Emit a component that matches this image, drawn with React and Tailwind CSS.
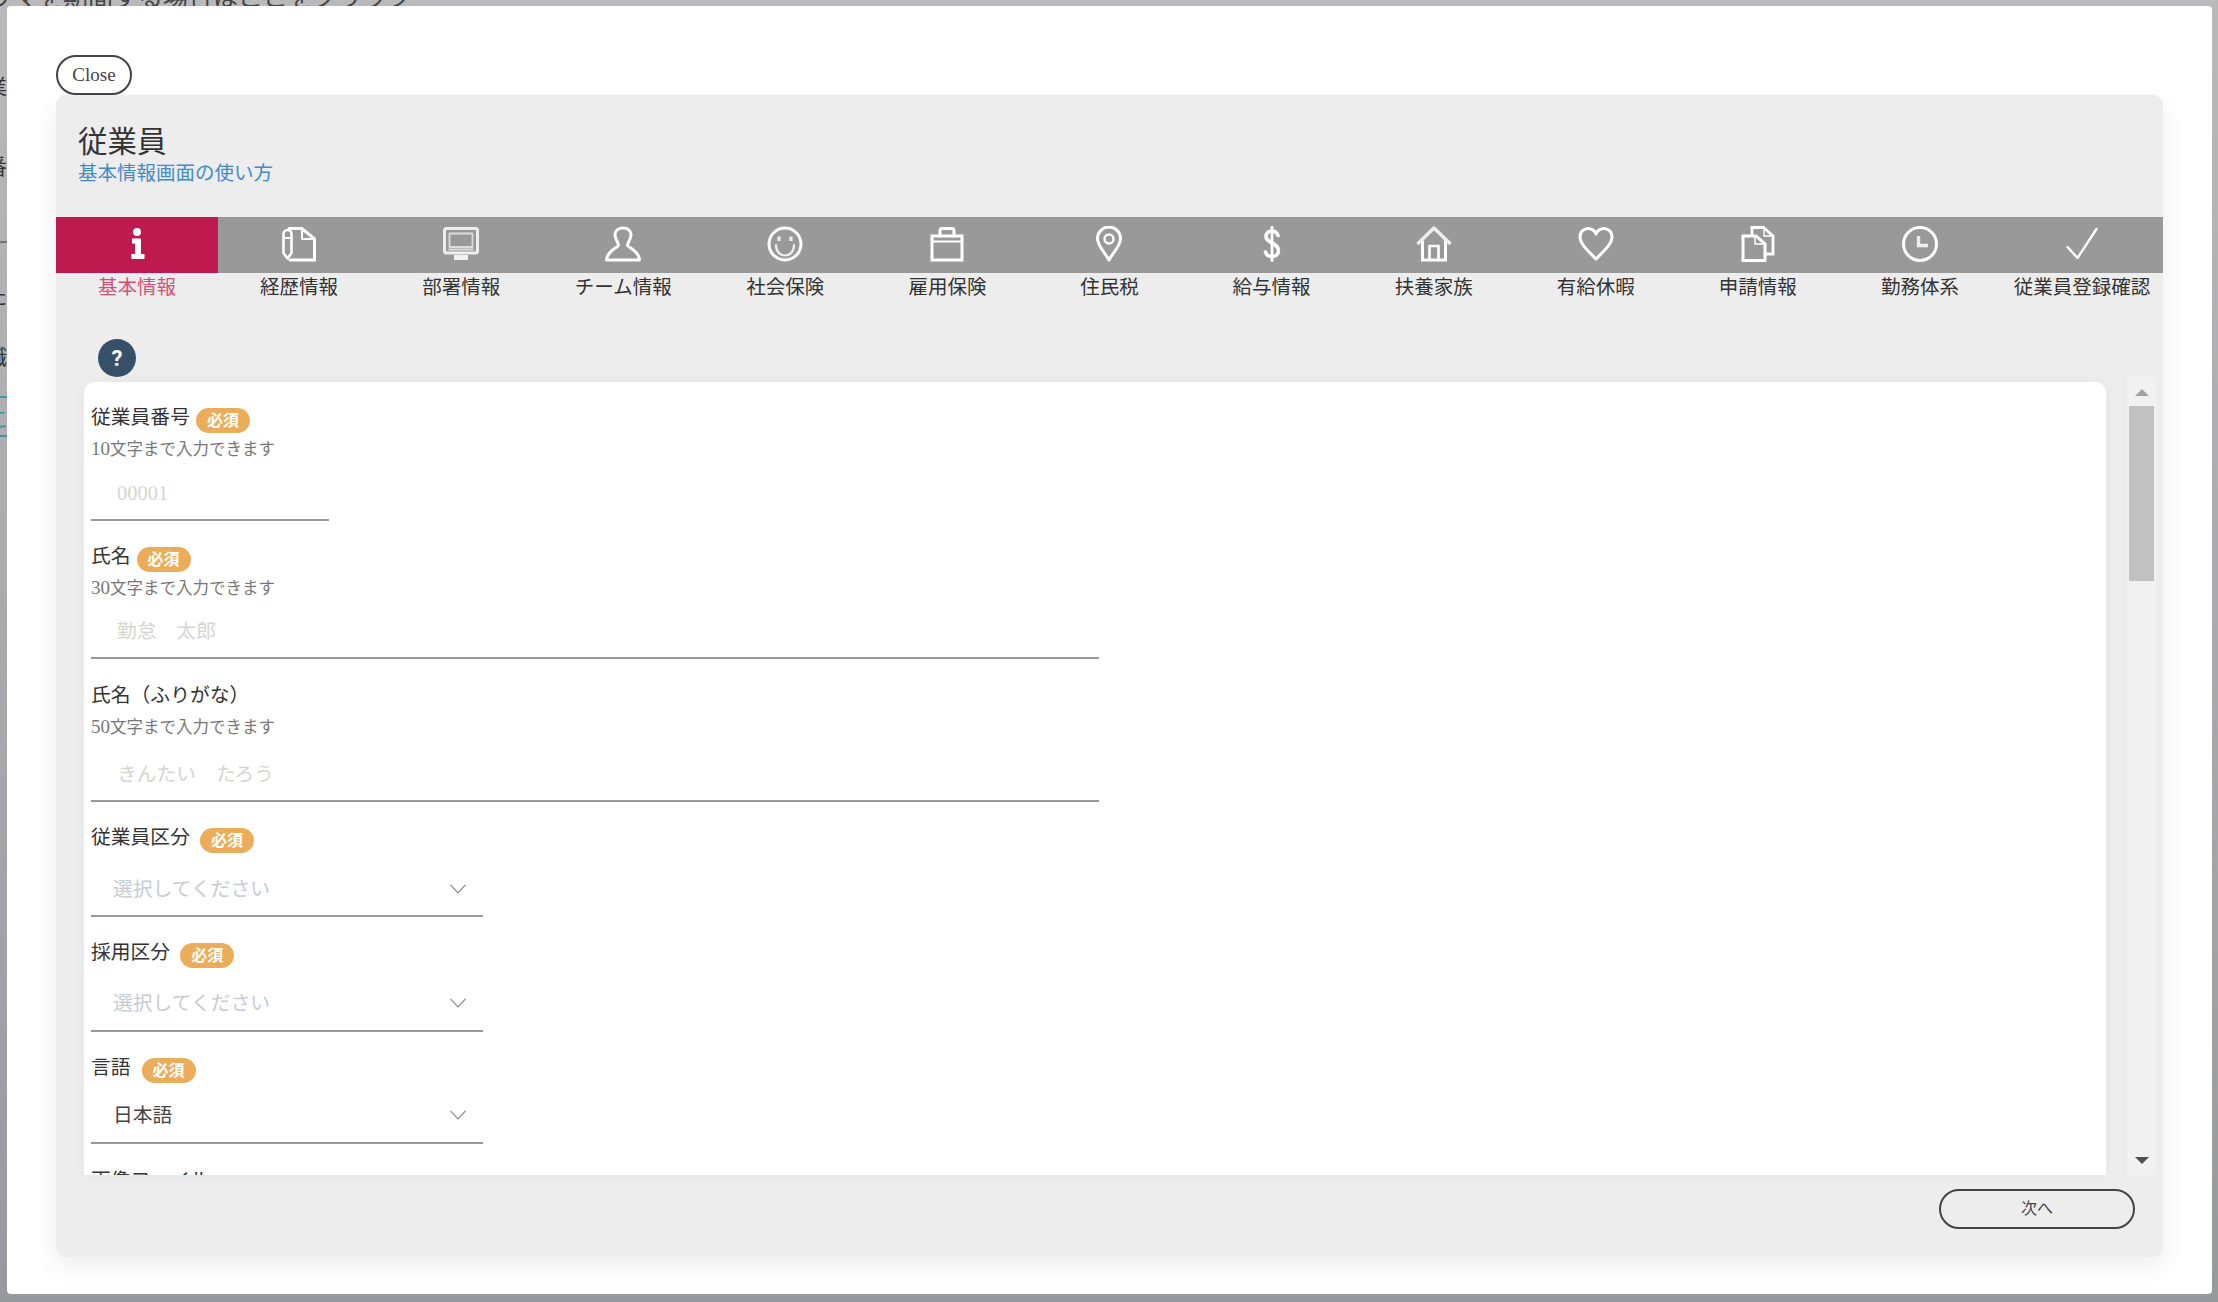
const serif = 'font-["Liberation_Serif","Noto_Sans_CJK_JP",serif]';

const Svg = ({ children, className = 'w-[36px] h-[36px]' }) => (
  <svg viewBox="0 0 36 36" fill="none" stroke="#fff" strokeWidth="2.800" strokeLinejoin="round" strokeLinecap="round" className={className}>
    {children}
  </svg>
);

const icons = {
  info: (
    <svg viewBox="0 0 36 36" fill="#fff" className="w-[36px] h-[36px]">
      <circle cx="18" cy="6" r="4" />
      <path d="M13 12.500h9V28h3.500v5h-13v-5H16V17.500h-3z" />
    </svg>
  ),
  career: (
    <Svg>
      <path d="M8 2.500H21L33.500 13V34H9" strokeWidth="3" strokeLinejoin="miter" />
      <path d="M21 4V13H33" strokeWidth="2" />
      <path d="M2.500 8a4 4 0 0 1 8 0V27L6.500 32.500 2.500 27z" strokeWidth="2.600" />
      <path d="M2.500 12H10.500" strokeWidth="2.200" />
    </Svg>
  ),
  dept: (
    <Svg>
      <rect x="1.500" y="2.500" width="33" height="24.500" rx="2" stroke="#eee" strokeWidth="3" />
      <path d="M6.500 7.500H29.500V21H6.500z" stroke="#ddd" strokeWidth="1.800" />
      <path d="M6 23.500H30" stroke="#ddd" strokeWidth="1.800" />
      <path d="M11 31.500H25" stroke="#f2f2f2" strokeWidth="5" strokeLinecap="butt" />
    </Svg>
  ),
  team: (
    <Svg>
      <path d="M18 2c5 0 8 3 8 7 0 4-3 7-3.500 10 0 3 11 4 12 15H1.500C2.500 23 13.500 22 13.500 19c-.5-3-3.500-6-3.500-10 0-4 3-7 8-7z" strokeWidth="3" />
    </Svg>
  ),
  social: (
    <Svg>
      <circle cx="18" cy="18" r="16" strokeWidth="3" />
      <path d="M12 10.500v4.500M24 10.500v4.500" stroke="#eee" strokeWidth="3.200" strokeLinecap="butt" />
      <path d="M9 19c0 14 18 14 18 0" stroke="#eee" strokeWidth="2.200" />
    </Svg>
  ),
  employ: (
    <Svg>
      <rect x="3" y="10" width="30" height="24" strokeWidth="3" strokeLinejoin="miter" />
      <path d="M11 10V4.500a2 2 0 0 1 2-2h10a2 2 0 0 1 2 2V10" strokeWidth="3" />
      <path d="M3 15.500H33" strokeWidth="2" />
    </Svg>
  ),
  pin: (
    <Svg>
      <path d="M18 34C13 25 6.500 20 6.500 12.500a11.500 11.500 0 0 1 23 0C29.500 20 23 25 18 34z" strokeWidth="3" />
      <circle cx="18" cy="13" r="4.500" strokeWidth="2.400" />
    </Svg>
  ),
  dollar: (
    <Svg>
      <path d="M24 9.500c-1-3-3.500-4.500-6-4.500-3.500 0-6 2.500-6 5.500 0 7 12.500 6 12.500 14 0 3.500-3 6-6.500 6-3 0-5.500-1.500-6.500-4.500" strokeWidth="3.600" />
      <path d="M18 1.500V34.500" strokeWidth="2.800" />
    </Svg>
  ),
  family: (
    <Svg>
      <path d="M1.500 18 18 2l16.500 16" stroke="#eee" strokeWidth="3.400" strokeLinecap="butt" />
      <path d="M6.500 15.500V34h23V15.500" strokeWidth="3" strokeLinejoin="miter" />
      <path d="M13.500 34V20h9V34" strokeWidth="2.600" strokeLinejoin="miter" />
    </Svg>
  ),
  leave: (
    <Svg>
      <path d="M18 33C9 24 2 17.500 2 11 2 5.500 6 2.500 10 2.500c3.500 0 6.500 2 8 5.500 1.500-3.500 4.500-5.500 8-5.500 4 0 8 3 8 8.500 0 6.500-7 13-16 22z" strokeWidth="3" />
    </Svg>
  ),
  request: (
    <Svg>
      <path d="M12 9V1.500H23.500L33 10V28H25" strokeLinejoin="miter" />
      <path d="M3 10H16L25 18V34.500H3z" strokeWidth="3" strokeLinejoin="miter" />
      <path d="M24 3V10H33" strokeWidth="1.400" />
      <path d="M15 11V18H24" strokeWidth="1.400" />
    </Svg>
  ),
  work: (
    <Svg>
      <circle cx="18" cy="18" r="16.500" strokeWidth="3" />
      <path d="M16.500 10V19.500H26" stroke="#eee" strokeWidth="3.400" strokeLinecap="butt" strokeLinejoin="miter" />
    </Svg>
  ),
  confirm: (
    <Svg>
      <path d="M3.500 21 13.500 32 32.500 3" strokeWidth="2.400" />
    </Svg>
  ),
};

const tabs = [
  { key: 'info', label: '基本情報', active: true },
  { key: 'career', label: '経歴情報' },
  { key: 'dept', label: '部署情報' },
  { key: 'team', label: 'チーム情報' },
  { key: 'social', label: '社会保険' },
  { key: 'employ', label: '雇用保険' },
  { key: 'pin', label: '住民税' },
  { key: 'dollar', label: '給与情報' },
  { key: 'family', label: '扶養家族' },
  { key: 'leave', label: '有給休暇' },
  { key: 'request', label: '申請情報' },
  { key: 'work', label: '勤務体系' },
  { key: 'confirm', label: '従業員登録確認' },
];

const Badge = ({ gap }) => (
  <span className={`${gap} mt-[6px] w-[54px] h-[25px] rounded-full bg-[#ecad5a] text-white text-[16px] leading-[25px] font-bold text-center`}>必須</span>
);

const Label = ({ text, required, gap = 'ml-[6px]', top = 'mt-[21px]' }) => (
  <div className={`flex items-center h-[28px] ${top}`}>
    <span className="text-[19.800px] leading-[30px] text-[#333]">{text}</span>
    {required && <Badge gap={gap} />}
  </div>
);

const Hint = ({ count }) => (
  <div className="mt-[6px] h-[24px] text-[16.500px] leading-[24px] text-[#777]">
    <span className="text-[19px]">{count}</span>文字まで入力できます
  </div>
);

const Chevron = () => (
  <svg viewBox="0 0 16 10" fill="none" stroke="#888" strokeWidth="1.200" className="w-[16px] h-[10px]">
    <path d="M.500.800 8 8.800 15.500.800" />
  </svg>
);

const TextField = ({ width, box, value, size = 'text-[19.800px]' }) => (
  <div className={`${width} ${box} flex items-center pl-[26px] border-b-2 border-[#999] ${size} text-[#d6d6d0]`}>
    {value}
  </div>
);

const SelectField = ({ box, value, placeholder }) => (
  <div className={`w-[392px] ${box} flex items-center justify-between pl-[22px] pr-[17px] border-b-2 border-[#999] text-[19.800px] ${placeholder ? 'text-[#c6cbd4]' : 'text-[#444]'}`}>
    <span className="mt-[2px]">{value}</span>
    <Chevron />
  </div>
);

export default function App() {
  return (
    <div className={`relative w-[2218px] h-[1302px] overflow-hidden bg-linear-to-b from-[#b9b9bb] via-[#a9a9ae] to-[#98989f] ${serif}`}>
      {/* page behind the modal */}
      <div className="absolute left-[-12px] top-[-19px] text-[25px] leading-[34px] text-[#444] whitespace-nowrap">リマを期間する場合はここをクリック</div>
      <div className="absolute left-[-14px] top-[72px] text-[21px] text-[#333]">業</div>
      <div className="absolute left-[-14px] top-[152px] text-[21px] text-[#333]">番</div>
      <div className="absolute left-0 top-[241px] w-[7px] h-[2px] bg-[#777]" />
      <div className="absolute left-[-14px] top-[282px] text-[21px] text-[#333]">た</div>
      <div className="absolute left-[-14px] top-[342px] text-[21px] text-[#333]">職</div>
      <div className="absolute left-0 top-[396px] w-[7px] h-[2px] bg-[#3f98a3]" />
      <div className="absolute left-[-12px] top-[404px] text-[21px] text-[#3f98a3]">こ</div>
      <div className="absolute left-0 top-[435px] w-[7px] h-[2px] bg-[#3f98a3]" />

      {/* modal */}
      <div className="absolute left-[7px] top-[6px] w-[2205px] h-[1288px] rounded-[4px] bg-white pt-[49px] pl-[49px]">
        <button className="block w-[76px] h-[40px] rounded-full border-2 border-[#444] bg-white text-[19px] leading-[34px] text-[#444]">Close</button>

        <div className="w-[2107px] h-[1162px] rounded-[10px] bg-[#ededed] shadow-[0_10px_26px_rgba(0,0,0,0.07)] overflow-hidden">
          <div className="h-[122px] pl-[22px] pt-[29px]">
            <div className="text-[29.500px] leading-[36px] text-[#333]">従業員</div>
            <a className="block text-[19.500px] leading-[28px] text-[#428bca]">基本情報画面の使い方</a>
          </div>

          <div className="grid grid-cols-13">
            {tabs.map((tab) => (
              <div key={tab.key} className="flex flex-col items-center">
                <div className={`w-full h-[56px] flex justify-center items-start pt-[9px] ${tab.active ? 'bg-[#be1a50]' : 'bg-[#999]'}`}>
                  {icons[tab.key]}
                </div>
                <div className={`h-[27px] text-[19.500px] leading-[30px] whitespace-nowrap ${tab.active ? 'text-[#d5507c]' : 'text-[#333]'}`}>{tab.label}</div>
              </div>
            ))}
          </div>

          <div className="h-[82px] pl-[42px] pt-[39px]">
            <div className="w-[38px] h-[38px] rounded-full bg-[#375069] flex items-center justify-center text-white text-[22px] font-bold font-[Roboto,sans-serif]">?</div>
          </div>

          <div className="flex h-[793px] items-start">
            <div className="ml-[28px] w-[2022px] h-[793px] overflow-hidden rounded-t-[10px] bg-white pl-[7px] shadow-[0_0_14px_rgba(0,0,0,0.04)]">
              <Label text="従業員番号" required />
              <Hint count="10" />
              <TextField width="w-[238px]" box="h-[60px] pt-[6px]" value="00001" size="text-[20.500px]" />

              <Label text="氏名" required />
              <Hint count="30" />
              <TextField width="w-[1008px]" box="h-[59px] pt-[7px]" value="勤怠　太郎" />

              <Label text="氏名（ふりがな）" top="mt-[22px]" />
              <Hint count="50" />
              <TextField width="w-[1008px]" box="h-[63px] pt-[11px]" value="きんたい　たろう" />

              <Label text="従業員区分" required gap="ml-[10px]" />
              <SelectField box="h-[66px] pt-[11px]" value="選択してください" placeholder />

              <Label text="採用区分" required gap="ml-[10px]" />
              <SelectField box="h-[66px] pt-[9px]" value="選択してください" placeholder />

              <Label text="言語" required gap="ml-[11px]" />
              <SelectField box="h-[63px] pt-[7px]" value="日本語" />

              <Label text="画像ファイル" top="mt-[22px]" />
            </div>

            <div className="ml-[21px] -mt-[5px] w-[29px] h-[798px] bg-[#f1f1f1] flex flex-col items-center justify-between pt-[12px] pb-[11px]">
              <div className="flex flex-col items-center">
                <div className="w-0 h-0 border-x-[7px] border-x-transparent border-b-[7px] border-b-[#a3a3a3]" />
                <div className="mt-[10px] w-[25px] h-[175px] bg-[#c1c1c1]" />
              </div>
              <div className="w-0 h-0 border-x-[7px] border-x-transparent border-t-[7px] border-t-[#505050]" />
            </div>
          </div>

          <div className="flex justify-end pr-[28px] pt-[14px]">
            <button className="w-[196px] h-[40px] rounded-full border-2 border-[#444] text-[16px] text-[#444]">次へ</button>
          </div>
        </div>
      </div>
    </div>
  );
}
